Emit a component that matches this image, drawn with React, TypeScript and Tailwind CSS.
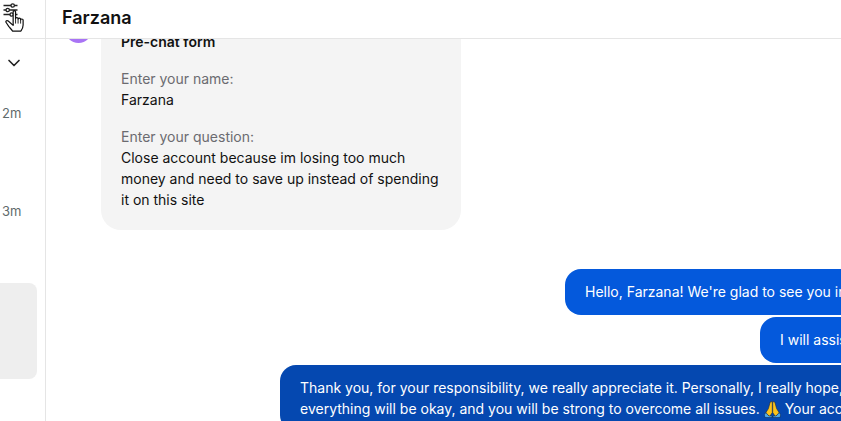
import React from 'react';
import { ChevronDown } from 'lucide-react';

const FiltersIcon = () => (
  <svg width="16" height="14" viewBox="0 0 16 14" fill="none" stroke="#222" strokeWidth="1.3">
    <path d="M0.5 2.5h14M0.5 7h14M0.5 11.5h14" />
    <rect x="8" y="0.8" width="3.4" height="3.4" rx="1.7" fill="#fff" />
    <rect x="3" y="5.3" width="3.4" height="3.4" rx="1.7" fill="#fff" />
    <rect x="7" y="9.8" width="3.4" height="3.4" rx="1.7" fill="#fff" />
  </svg>
);

const HandCursor = () => (
  <svg width="22" height="23" viewBox="0 0 20 21" fill="#fff" stroke="#111" strokeWidth="1.1" strokeLinejoin="round">
    <path d="M7.4 1.6c0-1.3 2.2-1.3 2.2 0v6.2c0-1.2 2.3-1.2 2.3 0v.6c0-1.2 2.3-1.2 2.3 0v.7c0-1.2 2.3-1.2 2.3.1v4.6c0 2.6-1.1 4.1-2 5.4H6.9c-1-1.3-2.2-2.6-3.4-4L1 11.4c-.8-1.2.8-2.4 1.9-1.4l4.5 4z" />
    <path d="M9.6 8.2v4.2M11.9 8.6v3.8M14.2 9.2v3.2" strokeWidth="0.8" />
  </svg>
);

const PrayEmoji = () => (
  <svg className="inline-block align-[-4px]" width="17" height="17" viewBox="0 0 17 17">
    <path d="M8.3 0.6 L6.2 1 L4.4 7.6 L1.6 12 L5.6 15.6 L8.3 11.6z" fill="#fcc21b" stroke="#14264a" strokeWidth="0.6" />
    <path d="M8.7 0.6 L10.8 1 L12.6 7.6 L15.4 12 L11.4 15.6 L8.7 11.6z" fill="#fcc21b" stroke="#14264a" strokeWidth="0.6" />
    <path d="M1.8 11.6 L0.2 13.8 L1 16.6 L8 16.6 L8 14.8 L5 15z" fill="#4fa8e6" stroke="#14264a" strokeWidth="0.6" />
    <path d="M15.2 11.6 L16.8 13.8 L16 16.6 L9 16.6 L9 14.8 L12 15z" fill="#4fa8e6" stroke="#14264a" strokeWidth="0.6" />
  </svg>
);

export default function App() {
  return (
    <div className="flex h-[421px] w-[841px] overflow-hidden bg-white text-[14px] leading-[21px] text-[#111] font-['Inter',sans-serif]">
      <aside className="relative flex w-[46px] shrink-0 flex-col border-r border-[#e5e5e5]">
        <div className="h-[39px] shrink-0 border-b border-[#e5e5e5] pl-[3px] pt-[3px]">
          <FiltersIcon />
        </div>
        <div className="absolute left-[5px] top-[10px]">
          <HandCursor />
        </div>
        <div className="flex h-[48px] shrink-0 items-center pl-[4px]">
          <ChevronDown size={20} strokeWidth={2} color="#222" />
        </div>
        <div className="pl-[2px] pt-[16px] text-[13px] leading-[20px] text-[#5f6b6b]">2m</div>
        <div className="pl-[2px] pt-[78px] text-[13px] leading-[20px] text-[#5f6b6b]">3m</div>
        <div className="mt-[62px] h-[96px] w-[37px] rounded-r-[8px] bg-[#eeeeee]" />
      </aside>

      <main className="flex min-w-0 flex-1 flex-col overflow-hidden">
        <header className="flex h-[39px] shrink-0 items-center border-b border-[#e5e5e5] pb-[4px] pl-[16px] text-[18px] font-semibold">
          Farzana
        </header>
        <div className="flex-1 overflow-hidden">
          <div className="-mt-[12px] flex gap-[9px] pl-[19px]">
            <div className="mt-[-11px] h-[27px] w-[27px] shrink-0 rounded-full bg-[#a974f5]" />
            <div className="h-[203px] w-[360px] rounded-b-[20px] bg-[#f4f4f4] px-[20px] pt-[4px]">
              <p className="font-semibold">Pre-chat form</p>
              <div className="mt-[16px]">
                <p className="text-[#6b6b70]">Enter your name:</p>
                <p>Farzana</p>
              </div>
              <div className="mt-[16px]">
                <p className="text-[#6b6b70]">Enter your question:</p>
                <p>Close account because im losing too much money and need to save up instead of spending it on this site</p>
              </div>
            </div>
          </div>
          <div className="mt-[39px] flex flex-col gap-[2px] whitespace-nowrap text-white">
            <div className="ml-[519px] h-[46px] w-[400px] rounded-[16px] bg-[#0459dc] px-[20px] py-[12px]">
              Hello, Farzana! We're glad to see you in our chat today.
            </div>
            <div className="ml-[714px] h-[46px] w-[300px] rounded-[16px] bg-[#0459dc] px-[20px] py-[12px]">
              I will assist you with this request.
            </div>
            <div className="ml-[234px] w-[800px] rounded-[16px] bg-[#0548b0] px-[20px] pb-[12px] pt-[12px]">
              <p>Thank you, for your responsibility, we really appreciate it. Personally, I really hope,</p>
              <p>
                everything will be okay, and you will be strong to overcome all issues. <PrayEmoji /> Your account
              </p>
            </div>
          </div>
        </div>
      </main>
    </div>
  );
}
